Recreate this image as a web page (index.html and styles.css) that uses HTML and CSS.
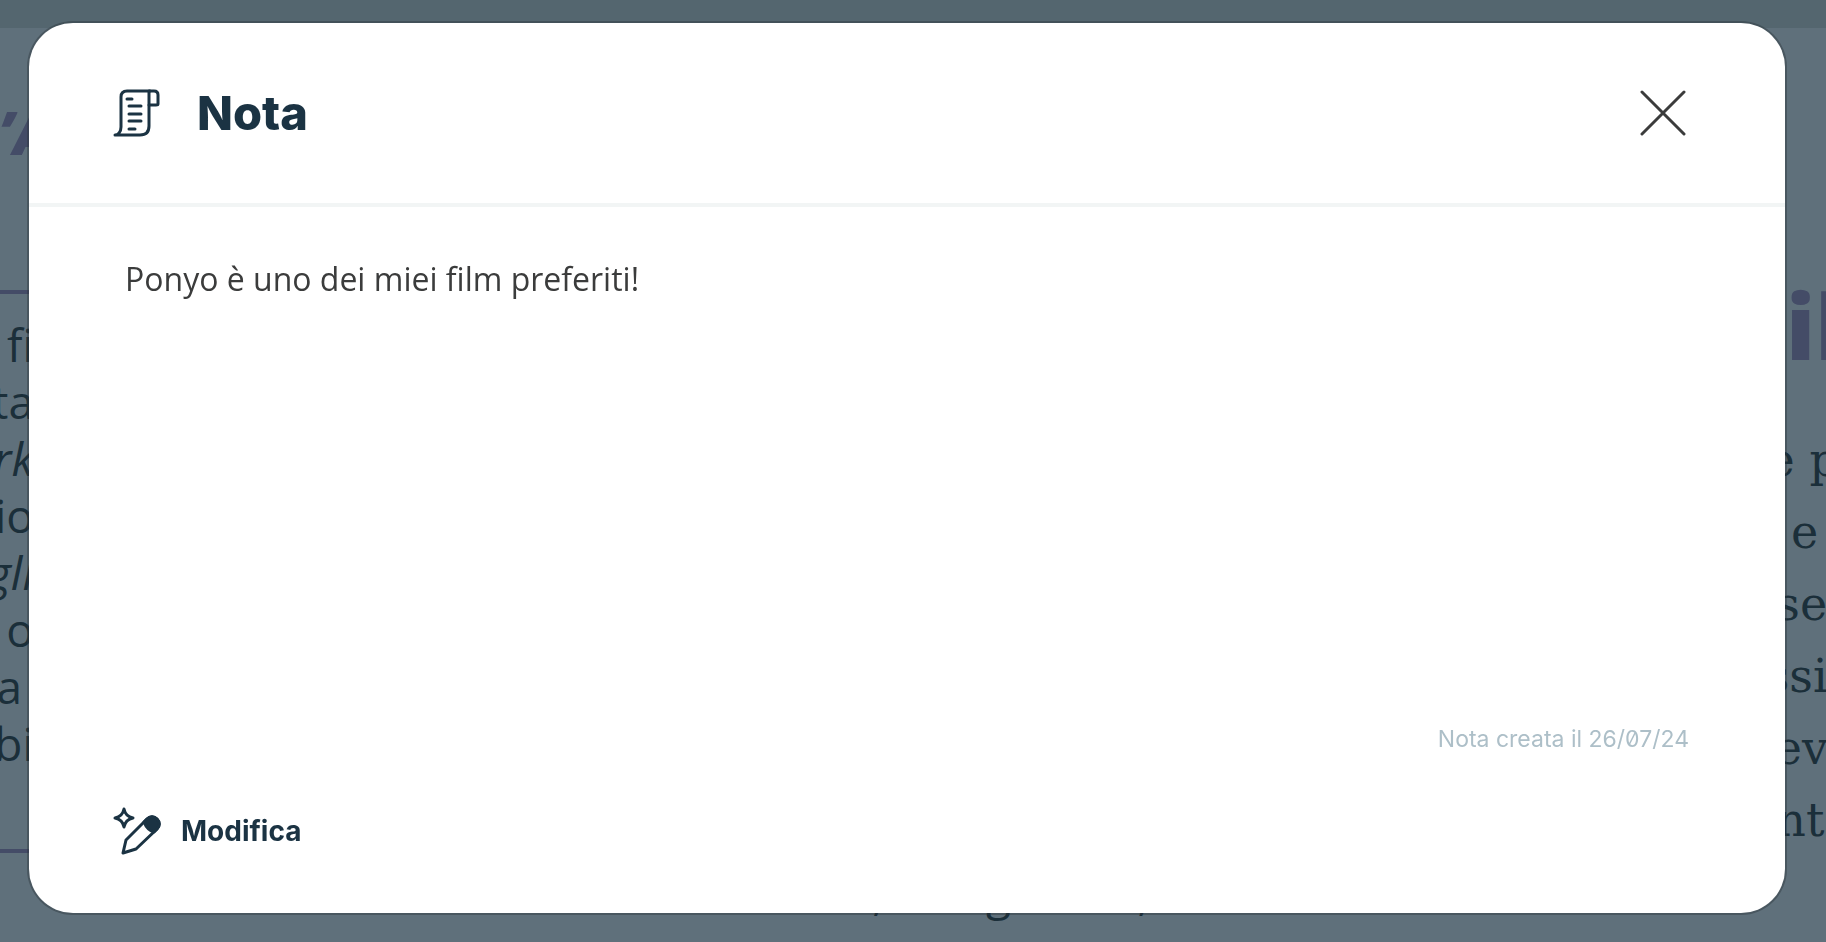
FILE: index.html
```
<!DOCTYPE html>
<html lang="it">
<head>
    <meta charset="UTF-8">
    <title>Nota</title>
    <link rel="stylesheet" href="styles.css">
</head>
<body>
<div class="page">
    <div class="topbar"></div>
    <div class="columns">
        <div class="left">
            <h2 class="left-title">’A</h2>
            <div class="card">
                <p>fi</p>
                <p>nta</p>
                <p><em>rk</em></p>
                <p>io</p>
                <p><em>gli</em></p>
                <p>o</p>
                <p>a&nbsp;</p>
                <p>bi</p>
            </div>
        </div>
        <div class="center">
            <p>nella casina, con grande,</p>
        </div>
        <div class="right">
            <h2 class="right-title">il</h2>
            <p>ne p</p>
            <p>si e</p>
            <p>isse</p>
            <p>ossi</p>
            <p>riev</p>
            <p>sint</p>
        </div>
    </div>
</div>

<div class="overlay">
    <div class="modal" role="dialog" aria-labelledby="modal-title">
        <div class="modal-header">
            <svg class="icon" viewBox="0 0 48 48">
                <path d="M37 2H14C10 2 8 4 8 8V38C8 43 5 46 2 46H27C33 46 36 43 36 37V2"/>
                <path d="M36 2H41C44 2 45 4 45 6V15C45 16 44 16 43 16H36"/>
                <path d="M14 10H19M16 17H28M16 25H28M16 32H28M16 40H22"/>
            </svg>
            <h1 class="modal-title" id="modal-title">Nota</h1>
            <button class="close" type="button" aria-label="Chiudi">
                <svg class="close-icon" viewBox="0 0 46 46">
                    <path d="M2 2L44 44M44 2L2 44"/>
                </svg>
            </button>
        </div>
        <div class="modal-body">
            <p class="note">Ponyo è uno dei miei film preferiti!</p>
            <p class="date">Nota creata il 26/07/24</p>
        </div>
        <div class="modal-footer">
            <button class="edit" type="button">
                <svg class="icon" viewBox="0 0 48 48">
                    <path d="M11 2C12 7 15 10 20 11C15 12 12 15 11 20C10 15 7 12 2 11C7 10 10 7 11 2Z"/>
                    <path d="M10 46L13 33L34 12C37 9 41 9 44 12C47 15 47 19 44 22L23 42Z"/>
                    <path class="fill" d="M31 15L34 12C37 9 41 9 44 12C47 15 47 19 44 22L41 25C37 24 33 20 31 15Z"/>
                </svg>
                Modifica
            </button>
        </div>
    </div>
</div>
</body>
</html>
```
FILE: styles.css
```
* {
    margin: 0;
    padding: 0;
    box-sizing: border-box;
}

body {
    height: 100vh;
    overflow: hidden;
    font-family: "Open Sans", sans-serif;
    color: #1d2525;
    background-color: #fff;
}

.page {
    height: 100vh;
    overflow: hidden;
}

.topbar {
    height: 28px;
    background-color: #d9dcd6;
}

.columns {
    display: flex;
    justify-content: space-between;
}

.left {
    display: flex;
    flex-direction: column;
    align-items: flex-end;
    width: 34px;
    padding-top: 62px;
}

.left-title {
    margin-right: -20px;
    height: 200px;
    line-height: 84px;
    font-size: 60px;
    font-style: italic;
    font-weight: 800;
    color: #a488bd;
}

.card {
    display: flex;
    flex-direction: column;
    align-items: flex-end;
    width: 100%;
    padding: 22px 0 77px;
    border-top: 4px solid #a488bd;
    border-bottom: 4px solid #a488bd;
    font-size: 46px;
    line-height: 57px;
    white-space: nowrap;
}

.center {
    padding-top: 836px;
    font-size: 46px;
    line-height: 57px;
}

.right {
    width: 88px;
    padding-top: 236px;
    font-family: "DejaVu Serif", serif;
    font-size: 46px;
    line-height: 72px;
    white-space: nowrap;
}

.right-title {
    margin-bottom: 38px;
    padding-left: 48px;
    font-family: "Open Sans", sans-serif;
    font-size: 90px;
    font-weight: 800;
    line-height: 122px;
    color: #a488bd;
}

.overlay {
    position: fixed;
    top: 0;
    left: 0;
    display: flex;
    width: 100%;
    height: 100%;
    padding: 23px 41px 29px 29px;
    background-color: rgba(27, 51, 67, .7);
}

.modal {
    display: flex;
    flex: 1;
    flex-direction: column;
    border-radius: 44px;
    background-color: #fff;
    box-shadow: 0 0 0 2px rgba(40, 50, 55, .4);
    color: #1b3343;
}

.modal-header {
    display: flex;
    align-items: center;
    gap: 36px;
    height: 184px;
    padding: 0 99px 0 84px;
    border-bottom: 4px solid #f2f5f5;
}

.icon {
    width: 48px;
    height: 48px;
    fill: none;
    stroke: #1b3343;
    stroke-width: 3;
    stroke-linecap: round;
    stroke-linejoin: round;
}

.icon .fill {
    fill: #1b3343;
}

.modal-title {
    font-family: Inter, sans-serif;
    font-size: 47px;
    font-weight: 800;
    line-height: 56px;
}

.close {
    width: 46px;
    height: 46px;
    margin-left: auto;
    border: none;
    background: none;
    cursor: pointer;
}

.close-icon {
    display: block;
    fill: none;
    stroke: #3b3c3c;
    stroke-width: 3;
    stroke-linecap: round;
}

.modal-body {
    display: flex;
    flex: 1;
    flex-direction: column;
    justify-content: space-between;
    padding: 50px 96px 0;
}

.note {
    font-size: 32px;
    line-height: 44px;
    color: #3b3c3c;
}

.date {
    font-family: Inter, sans-serif;
    font-size: 23px;
    line-height: 32px;
    font-feature-settings: "zero";
    text-align: right;
    color: #adbfc8;
}

.modal-footer {
    padding: 52px 84px 58px;
}

.edit {
    display: flex;
    align-items: center;
    gap: 20px;
    border: none;
    background: none;
    font-family: Inter, sans-serif;
    font-size: 28px;
    font-weight: 700;
    color: #1b3343;
    cursor: pointer;
}
```
